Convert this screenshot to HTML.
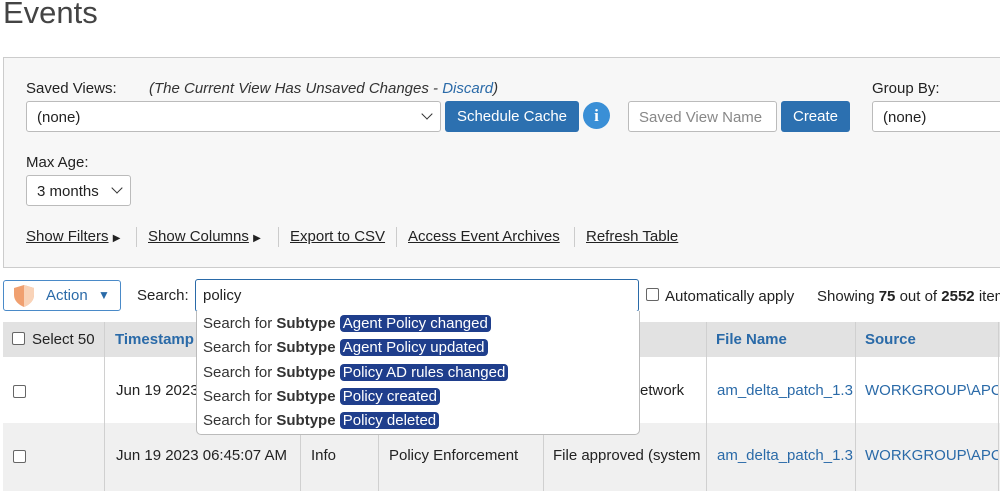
<!DOCTYPE html>
<html><head><meta charset="utf-8"><style>
*{box-sizing:border-box;margin:0;padding:0}
body{width:1000px;height:491px;overflow:hidden;background:#fff;font-family:"Liberation Sans",sans-serif;font-size:15px;color:#222;position:relative}
.a{position:absolute;white-space:nowrap}
.panel{position:absolute;left:3px;top:57px;width:1010px;height:211px;background:#f7f7f7;border:1px solid #ccc}
.sel{position:absolute;background:#fff;border:1px solid #bbb;border-radius:3px;height:31px;padding:7px 10px;font-size:15px}
.chev{position:absolute;right:9px;top:10px;width:8px;height:8px;border-right:1.5px solid #333;border-bottom:1.5px solid #333;transform:rotate(45deg)}
.btn{position:absolute;background:#2c70b0;color:#fff;border-radius:3px;height:31px;text-align:center;line-height:31px;font-size:15px}
.lk{text-decoration:underline;color:#222}
.sep{position:absolute;width:1px;height:20px;background:#ccc;top:227px}
.blue{color:#2a6aa8}
.hdr{position:absolute;left:3px;top:322px;width:997px;height:35px;background:#e2e2e2}
.r1{position:absolute;left:3px;top:357px;width:997px;height:66px;background:#fff}
.r2{position:absolute;left:3px;top:423px;width:997px;height:68px;background:#f0f0f0}
.vl{position:absolute;top:322px;height:169px;width:1px;background:#d0d0d0}
.cb{position:absolute;width:13px;height:13px;border:1px solid #666;border-radius:2px;background:#fff}
.dd{position:absolute;left:196px;top:311px;width:444px;height:124px;background:#fff;border:1px solid #bbb;border-top:none;border-radius:0 0 5px 5px}
.it{position:absolute;left:6px;font-size:15px;color:#333}
.pill{background:#1f3e8c;color:#fff;border-radius:4px;padding:0 3px}
.c{overflow:hidden}
</style></head><body>
<div class="a" style="left:3px;top:-5px;font-size:31px;color:#444">Events</div>
<div class="panel"></div>
<div class="a" style="left:26px;top:80px">Saved Views:</div>
<div class="a" style="left:149px;top:80px;font-style:italic;color:#333">(The Current View Has Unsaved Changes - <span class="blue">Discard</span>)</div>
<div class="sel" style="left:26px;top:101px;width:415px">(none)<span class="chev" style="top:8px"></span></div>
<div class="btn" style="left:445px;top:101px;width:134px">Schedule Cache</div>
<div class="a" style="left:583px;top:102px;width:27px;height:27px;border-radius:50%;background:#3a8fd6;color:#fff;text-align:center;line-height:27px;font-weight:bold;font-family:'Liberation Serif',serif;font-size:17px">i</div>
<div class="sel" style="left:628px;top:101px;width:149px;color:#888">Saved View Name</div>
<div class="btn" style="left:781px;top:101px;width:69px">Create</div>
<div class="a" style="left:872px;top:80px">Group By:</div>
<div class="sel" style="left:872px;top:101px;width:140px">(none)</div>
<div class="a" style="left:26px;top:154px">Max Age:</div>
<div class="sel" style="left:26px;top:175px;width:105px;height:31px">3 months<span class="chev" style="top:8px"></span></div>
<div class="a" style="left:26px;top:228px"><span class="lk">Show Filters</span> <span style="font-size:10px">&#9654;</span></div>
<div class="sep" style="left:136px"></div>
<div class="a" style="left:148px;top:228px"><span class="lk">Show Columns</span> <span style="font-size:10px">&#9654;</span></div>
<div class="sep" style="left:278px"></div>
<div class="a lk" style="left:290px;top:228px">Export to CSV</div>
<div class="sep" style="left:396px"></div>
<div class="a lk" style="left:408px;top:228px">Access Event Archives</div>
<div class="sep" style="left:574px"></div>
<div class="a lk" style="left:586px;top:228px">Refresh Table</div>

<div class="a" style="left:3px;top:280px;width:118px;height:31px;border:1px solid #4a8ac8;border-radius:3px;background:#fff"></div>
<svg class="a" style="left:12px;top:284px" width="24" height="24" viewBox="0 0 24 24"><path d="M12 1 L22 4 V11 C22 17 17 21 12 23 C7 21 2 17 2 11 V4 Z" fill="#f0a070"/><path d="M12 1 L22 4 V11 C22 17 17 21 12 23 Z" fill="#f9d3b8"/></svg>
<div class="a blue" style="left:46px;top:287px">Action</div>
<div class="a blue" style="left:98px;top:288px;font-size:12px">&#9660;</div>
<div class="a" style="left:137px;top:287px">Search:</div>
<div class="a" style="left:195px;top:279px;width:444px;height:33px;border:1px solid #2a6aa8;border-radius:3px;background:#fff;padding:7px 7px">policy</div>
<div class="cb" style="left:646px;top:288px"></div>
<div class="a" style="left:665px;top:288px">Automatically apply</div>
<div class="a" style="left:817px;top:288px">Showing <b>75</b> out of <b>2552</b> items</div>

<div class="hdr"></div><div class="r1"></div><div class="r2"></div>
<div class="vl" style="left:104px"></div><div class="vl" style="left:300px"></div><div class="vl" style="left:378px"></div><div class="vl" style="left:543px"></div><div class="vl" style="left:706px"></div><div class="vl" style="left:855px"></div><div class="vl" style="left:998px"></div>
<div class="cb" style="left:12px;top:332px"></div>
<div class="a" style="left:32px;top:331px">Select 50</div>
<div class="a blue" style="left:115px;top:331px;font-weight:bold">Timestamp</div>
<div class="a blue" style="left:716px;top:331px;font-weight:bold">File Name</div>
<div class="a blue" style="left:865px;top:331px;font-weight:bold">Source</div>
<div class="cb" style="left:13px;top:385px"></div>
<div class="a" style="left:116px;top:382px">Jun 19 2023 06:45:07 AM</div>
<div class="a" style="left:640px;top:382px">etwork</div>
<div class="a blue" style="left:717px;top:382px">am_delta_patch_1.3</div>
<div class="a blue c" style="left:865px;top:382px;width:133px">WORKGROUP\APC-</div>
<div class="cb" style="left:13px;top:450px"></div>
<div class="a" style="left:116px;top:447px">Jun 19 2023 06:45:07 AM</div>
<div class="a" style="left:311px;top:447px">Info</div>
<div class="a" style="left:389px;top:447px">Policy Enforcement</div>
<div class="a c" style="left:553px;top:447px;width:153px">File approved (system</div>
<div class="a blue c" style="left:717px;top:447px;width:138px">am_delta_patch_1.3</div>
<div class="a blue c" style="left:865px;top:447px;width:133px">WORKGROUP\APC-</div>

<div class="dd">
<div class="a it" style="top:4px">Search for <b>Subtype</b> <span class="pill">Agent Policy changed</span></div>
<div class="a it" style="top:28px">Search for <b>Subtype</b> <span class="pill">Agent Policy updated</span></div>
<div class="a it" style="top:53px">Search for <b>Subtype</b> <span class="pill">Policy AD rules changed</span></div>
<div class="a it" style="top:77px">Search for <b>Subtype</b> <span class="pill">Policy created</span></div>
<div class="a it" style="top:101px">Search for <b>Subtype</b> <span class="pill">Policy deleted</span></div>
</div>
</body></html>
